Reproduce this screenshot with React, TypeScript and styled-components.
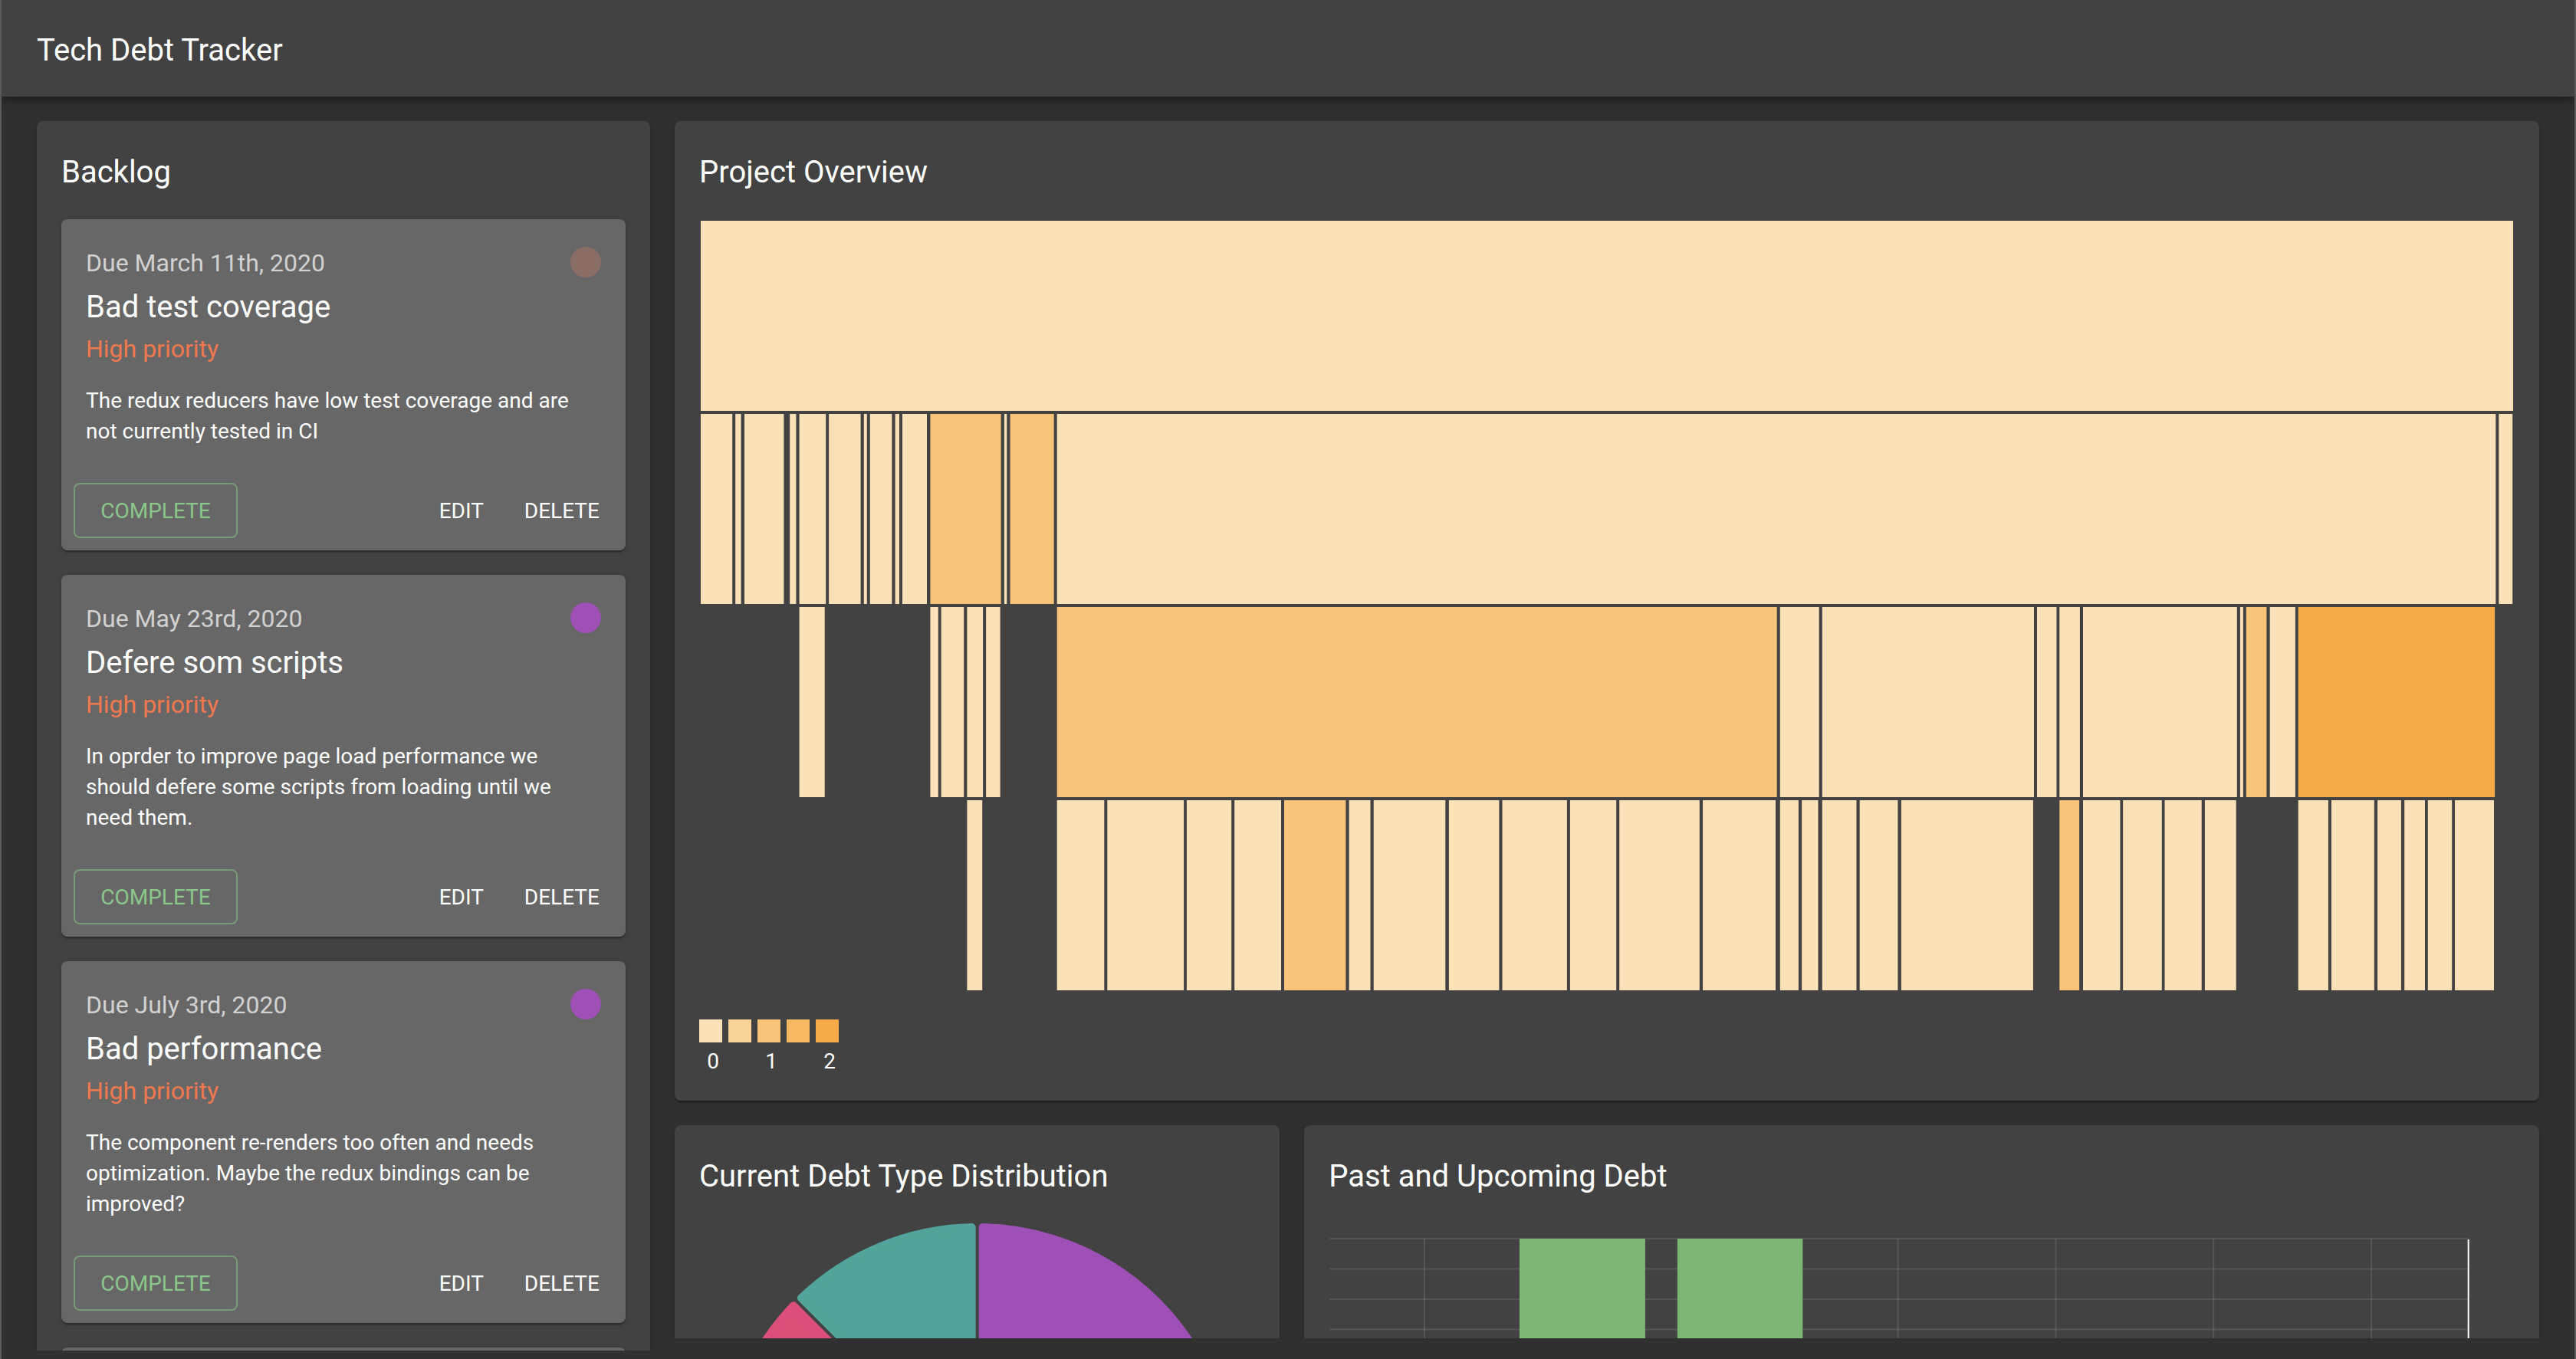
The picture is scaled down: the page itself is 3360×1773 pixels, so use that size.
import React from "react";
import styled, { createGlobalStyle } from "styled-components";

const colors = {
  page: "#303030",
  paper: "#424242",
  item: "#676767",
  edge: "#5a5a5a",
  text: "#ffffff",
  muted: "#d1d1d1",
  priority: "#f0784f",
  complete: "#8bc78a",
  completeBorder: "#779a79",
  purple: "#9f50b6",
  teal: "#52a49a",
  pink: "#dc4f79",
  brown: "#8a6e65",
  bar: "#7cb874",
};

const heat = ["#fae1b8", "#fad399", "#f7c479", "#f5b961", "#f4ab48"];

const GlobalStyle = createGlobalStyle`
  *, *::before, *::after { box-sizing: border-box; }
  body {
    margin: 0;
    background: ${colors.page};
    color: ${colors.text};
    font-family: Roboto, "Liberation Sans", sans-serif;
  }
  h1, h2, h3, p { margin: 0; font-weight: 400; }
`;

const paperShadow =
  "0 4px 2px -2px rgba(0,0,0,.2), 0 2px 2px rgba(0,0,0,.14), 0 2px 6px rgba(0,0,0,.12)";

const Shell = styled.div`
  display: flex;
  flex-direction: column;
  height: 100vh;
  overflow: hidden;
  border: solid ${colors.edge};
  border-width: 0 2px;
`;

const TopBar = styled.header`
  display: flex;
  align-items: center;
  flex: none;
  height: 126px;
  padding: 6px 46px 0;
  background: ${colors.paper};
  box-shadow: 0 4px 8px -2px rgba(0, 0, 0, 0.2), 0 8px 10px rgba(0, 0, 0, 0.14),
    0 2px 20px rgba(0, 0, 0, 0.12);
  z-index: 1;
`;

const AppTitle = styled.h1`
  font-size: 40px;
  line-height: 64px;
`;

const Workspace = styled.main`
  display: grid;
  grid-template-columns: minmax(0, 1fr) minmax(0, 3fr);
  gap: 16px;
  flex: 1;
  min-height: 0;
  padding: 0 38px;
`;

const ScrollColumn = styled.div<{ $bottom: number }>`
  min-height: 0;
  margin-bottom: ${(p) => p.$bottom}px;
  padding: 32px 8px 0;
  overflow-y: auto;
  scrollbar-width: none;
`;

const Paper = styled.section`
  padding: 32px;
  border-radius: 8px;
  background: ${colors.paper};
  box-shadow: ${paperShadow};
`;

const PaperTitle = styled.h2`
  margin-bottom: 32px;
  padding-top: 6px;
  font-size: 40px;
  line-height: 58px;
`;

const ItemList = styled.ul`
  display: flex;
  flex-direction: column;
  gap: 32px;
  margin: 0;
  padding: 0;
  list-style: none;
`;

const Item = styled.li`
  border-radius: 8px;
  background: ${colors.item};
  box-shadow: ${paperShadow};
`;

const ItemBody = styled.div`
  padding: 32px;
`;

const ItemTop = styled.div`
  display: flex;
  align-items: center;
  justify-content: space-between;
`;

const DueDate = styled.p`
  padding-top: 2px;
  color: ${colors.muted};
  font-size: 32px;
  line-height: 46px;
`;

const TypeDot = styled.span<{ $color: string }>`
  width: 40px;
  height: 40px;
  border-radius: 50%;
  background: ${(p) => p.$color};
`;

const ItemTitle = styled.h3`
  padding-top: 6px;
  font-size: 40px;
  line-height: 58px;
`;

const Priority = styled.p`
  padding-top: 2px;
  color: ${colors.priority};
  font-size: 32px;
  line-height: 46px;
`;

const Description = styled.p`
  margin: 25px 0 -1px;
  font-size: 28px;
  line-height: 40px;
`;

const Actions = styled.div`
  display: flex;
  padding: 16px;
`;

const Button = styled.button`
  min-width: 128px;
  height: 72px;
  padding: 2px 18px 0;
  border: 0;
  border-radius: 8px;
  background: transparent;
  color: ${colors.text};
  font-family: inherit;
  font-size: 28px;
  font-weight: 400;
  line-height: 48px;
  text-transform: uppercase;
  cursor: pointer;
`;

const CompleteButton = styled(Button)`
  min-width: 214px;
  margin-right: auto;
  border: 2px solid ${colors.completeBorder};
  color: ${colors.complete};
`;

const Board = styled.div`
  display: grid;
  grid-template-columns: repeat(12, minmax(0, 1fr));
  gap: 32px;
`;

const Panel = styled(Paper)<{ $span: number }>`
  grid-column: span ${(p) => p.$span};
`;

const Icicle = styled.svg`
  display: block;
  width: 100%;
  height: 1008px;
`;

const Legend = styled.ul`
  display: flex;
  gap: 8px;
  margin: 36px 0 0;
  padding: 0 0 10px;
  list-style: none;
`;

const LegendStep = styled.li`
  width: 30px;
  height: 64px;
`;

const Swatch = styled.span<{ $color: string }>`
  display: block;
  height: 30px;
  background: ${(p) => p.$color};
`;

const LegendLabel = styled.span`
  display: block;
  padding: 2px 0 0 6px;
  font-size: 28px;
  line-height: 46px;
  text-align: center;
`;

const PieChart = styled.svg`
  display: block;
  width: 100%;
  height: 674px;
`;

const BarChart = styled.svg`
  display: block;
  width: 100%;
  height: 674px;
`;

type Debt = { due: string; title: string; dot: string; text: string };

const backlog: Debt[] = [
  {
    due: "Due March 11th, 2020",
    title: "Bad test coverage",
    dot: colors.brown,
    text: "The redux reducers have low test coverage and are not currently tested in CI",
  },
  {
    due: "Due May 23rd, 2020",
    title: "Defere som scripts",
    dot: colors.purple,
    text: "In oprder to improve page load performance we should defere some scripts from loading until we need them.",
  },
  {
    due: "Due July 3rd, 2020",
    title: "Bad performance",
    dot: colors.purple,
    text: "The component re-renders too often and needs optimization. Maybe the redux bindings can be improved?",
  },
];

// Each cell: [start, end, heat level]; one array per depth of the file tree.
type Cell = [number, number, number?];

const tree: Cell[][] = [
  [[2, 2366]],
  [
    [2, 43.2], [47.2, 54.6], [59, 110.4], [118.2, 126.4], [130.6, 165.2],
    [169.1, 210.6], [214.8, 218.8], [222.8, 251.4], [255.6, 261], [265, 297],
    [301.4, 393.6, 2], [397.9, 401.3], [405.6, 462.7, 2], [466.7, 2343.3],
    [2347.3, 2365.2],
  ],
  [
    [130.6, 163.7], [301.4, 311.8], [315.6, 345.2], [349.4, 370.1],
    [374.1, 392.6], [466.7, 1405.7, 2], [1409.8, 1460.7], [1464.8, 1741],
    [1745, 1770.5], [1774.3, 1800.9], [1805, 2005.8], [2009.9, 2013.9],
    [2017.8, 2044.4, 2], [2048.7, 2081.9], [2085.7, 2342.1, 4],
  ],
  [
    [349.4, 369.2], [466.7, 528.3], [532.3, 632.1], [635.9, 694.2],
    [698.2, 759], [763, 843.4, 2], [847.6, 875.5], [879.7, 973.3],
    [977.9, 1043.4], [1047.5, 1131.9], [1135.9, 1196.2], [1200.2, 1304.8],
    [1309, 1404], [1409.8, 1433.9], [1438.2, 1459.5], [1464.8, 1509.5],
    [1513.7, 1563.4], [1567.9, 1739.9], [1774.3, 1800.1, 2], [1805, 1853.4],
    [1857.1, 1907.8], [1911.5, 1959.7], [1963.9, 2004.7], [2085.7, 2124.9],
    [2128.9, 2184.8], [2189.1, 2219.9], [2224.2, 2251], [2254.8, 2286.2],
    [2290, 2341],
  ],
];

const legendLabels = ["0", "", "1", "", "2"];

const RADIUS = 337;
const slices = [
  { from: 0, to: 135, color: colors.purple },
  { from: 135, to: 225, color: colors.brown },
  { from: 225, to: 315, color: colors.pink },
  { from: 315, to: 360, color: colors.teal },
];

// A slice is drawn slightly small and stroked with its own colour, so that its corners are round.
const CORNER = 5;
const INSET = 2 + CORNER;

function slicePath(fromDeg: number, toDeg: number) {
  const from = (fromDeg * Math.PI) / 180;
  const to = (toDeg * Math.PI) / 180;
  const outer = RADIUS - CORNER;
  const shift = Math.asin(INSET / outer);
  const half = (to - from) / 2;
  const apex = INSET / Math.sin(half);
  const at = (angle: number, r: number) =>
    `${(r * Math.sin(angle)).toFixed(2)} ${(-r * Math.cos(angle)).toFixed(2)}`;
  const large = to - from > Math.PI ? 1 : 0;
  return `M${at(from + half, apex)} L${at(from + shift, outer)} A${outer} ${outer} 0 ${large} 1 ${at(to - shift, outer)} Z`;
}

const gridRows = Array.from({ length: 15 }, (_, i) => 20 + i * 39.5);
const gridColumns = Array.from({ length: 7 }, (_, i) => 125 + i * 205.9);

export default function App() {
  return (
    <>
      <GlobalStyle />
      <Shell>
        <TopBar>
          <AppTitle>Tech Debt Tracker</AppTitle>
        </TopBar>
        <Workspace>
          <ScrollColumn $bottom={11}>
            <Paper>
              <PaperTitle>Backlog</PaperTitle>
              <ItemList>
                {backlog.map((debt) => (
                  <Item key={debt.title}>
                    <ItemBody>
                      <ItemTop>
                        <DueDate>{debt.due}</DueDate>
                        <TypeDot $color={debt.dot} />
                      </ItemTop>
                      <ItemTitle>{debt.title}</ItemTitle>
                      <Priority>High priority</Priority>
                      <Description>{debt.text}</Description>
                    </ItemBody>
                    <Actions>
                      <CompleteButton type="button">Complete</CompleteButton>
                      <Button type="button">Edit</Button>
                      <Button type="button">Delete</Button>
                    </Actions>
                  </Item>
                ))}
                <Item>
                  <ItemBody />
                </Item>
              </ItemList>
            </Paper>
          </ScrollColumn>
          <ScrollColumn $bottom={27}>
            <Board>
              <Panel $span={12}>
                <PaperTitle>Project Overview</PaperTitle>
                <Icicle viewBox="0 0 2368 1008" preserveAspectRatio="none" aria-hidden="true">
                  {tree.map((row, depth) =>
                    row.map(([start, end, level = 0]) => (
                      <rect
                        key={`${depth}-${start}`}
                        x={start}
                        y={2 + depth * 252}
                        width={end - start}
                        height={248}
                        fill={heat[level]}
                      />
                    ))
                  )}
                </Icicle>
                <Legend>
                  {heat.map((color, i) => (
                    <LegendStep key={color}>
                      <Swatch $color={color} />
                      <LegendLabel>{legendLabels[i]}</LegendLabel>
                    </LegendStep>
                  ))}
                </Legend>
              </Panel>
              <Panel $span={4}>
                <PaperTitle>Current Debt Type Distribution</PaperTitle>
                <PieChart viewBox="-337 -337 674 674" aria-hidden="true">
                  {slices.map((s) => (
                    <path
                      key={s.from}
                      d={slicePath(s.from, s.to)}
                      fill={s.color}
                      stroke={s.color}
                      strokeWidth={CORNER * 2}
                      strokeLinejoin="round"
                    />
                  ))}
                </PieChart>
              </Panel>
              <Panel $span={8}>
                <PaperTitle>Past and Upcoming Debt</PaperTitle>
                <BarChart viewBox="0 0 1547 674" preserveAspectRatio="none" aria-hidden="true">
                  <g stroke="#ffffff" strokeOpacity={0.1} strokeWidth={2}>
                    {gridRows.map((y) => (
                      <line key={y} x1={1} x2={1487} y1={y} y2={y} />
                    ))}
                    {gridColumns.map((x) => (
                      <line key={x} x1={x} x2={x} y1={20} y2={573} />
                    ))}
                  </g>
                  <rect x={249} y={20} width={164} height={553} fill={colors.bar} />
                  <rect x={455} y={20} width={163.5} height={553} fill={colors.bar} />
                  <line x1={1487} x2={1487} y1={21} y2={573} stroke="#ffffff" strokeWidth={2} />
                </BarChart>
              </Panel>
            </Board>
          </ScrollColumn>
        </Workspace>
      </Shell>
    </>
  );
}
